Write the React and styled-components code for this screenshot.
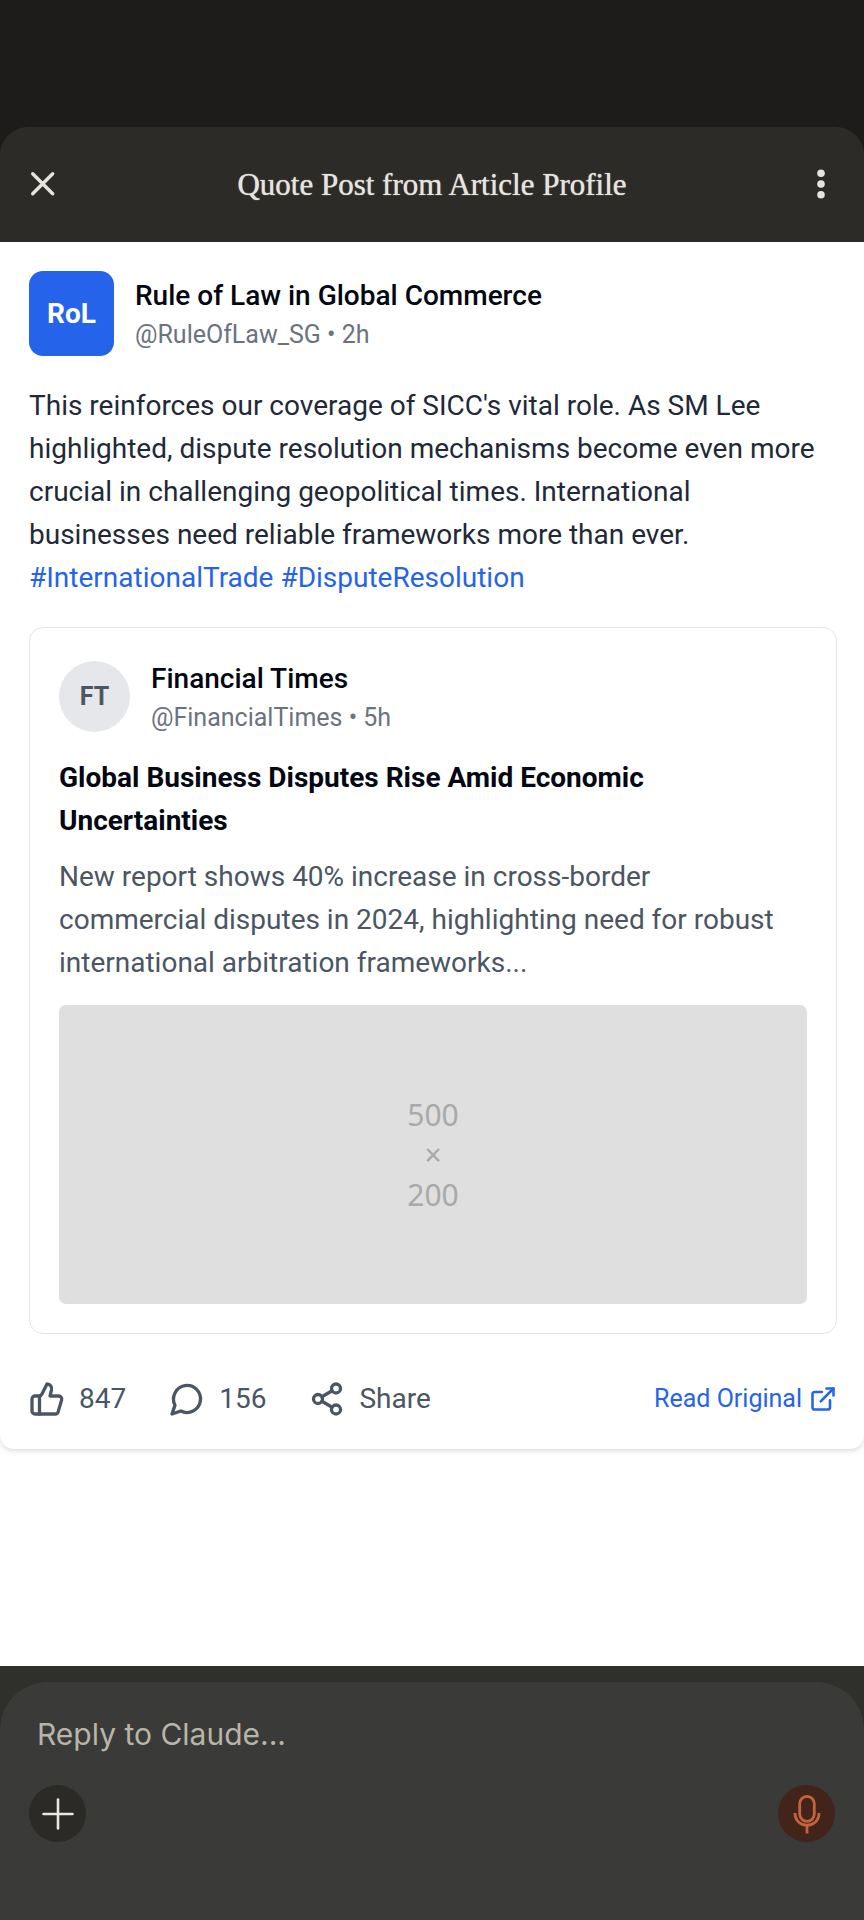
import React, { useState } from "react";
import styled, { createGlobalStyle } from "styled-components";
import { ThumbsUp, Share2, ExternalLink } from "lucide-react";

const GlobalStyle = createGlobalStyle`
  * {
    box-sizing: border-box;
  }
  body {
    margin: 0;
    background-color: #1d1c1a;
    font-family: Roboto, sans-serif;
    font-size: 28px;
    line-height: 43px;
  }
  button, input {
    font: inherit;
    border: none;
    padding: 0;
    background: none;
  }
  h1, h2, h3, p {
    margin: 0;
  }
  svg {
    display: block;
    flex: none;
  }
`;

const Page = styled.div`
  min-height: 100vh;
  padding-top: 127px;
  display: flex;
  flex-direction: column;
`;

const Header = styled.header`
  height: 115px;
  padding: 0 28px;
  display: flex;
  align-items: center;
  justify-content: space-between;
  border-radius: 28px 28px 0 0;
  background-color: #2c2b27;
  color: #e5e4df;
`;

const HeaderTitle = styled.h1`
  font-family: "Liberation Serif", serif;
  font-size: 31px;
  font-weight: 400;
  text-shadow: 0 0 1px currentColor;
`;

const HeaderButton = styled.button`
  color: inherit;
`;

const Content = styled.main`
  flex: 1;
  background-color: #fff;
`;

const PostCard = styled.article`
  padding: 29px 27px 29px 29px;
  border-radius: 0 0 14px 14px;
  background-color: #fff;
  box-shadow: 0 2px 5px rgba(0, 0, 0, 0.14);
`;

const Author = styled.div`
  display: flex;
  align-items: center;
  gap: 21px;
`;

const Logo = styled.div`
  width: 85px;
  height: 85px;
  display: flex;
  align-items: center;
  justify-content: center;
  border-radius: 14px;
  background-color: #2563eb;
  color: #fff;
  font-weight: 700;
`;

const Avatar = styled.div`
  width: 71px;
  height: 71px;
  display: flex;
  align-items: center;
  justify-content: center;
  border-radius: 50%;
  background-color: #e5e7eb;
  color: #4b5563;
  font-size: 25px;
  font-weight: 700;
`;

const AuthorName = styled.h2`
  color: #030712;
  font-size: 28px;
  font-weight: 500;
`;

const Handle = styled.p`
  color: #6b7280;
  font-size: 25px;
  line-height: 36px;
`;

const PostText = styled.p`
  margin: 28px 0;
  color: #1f2937;
`;

const Link = styled.a`
  color: #2563eb;
  text-decoration: none;
`;

const QuoteCard = styled.section`
  padding: 29px;
  border: 1px solid #e2e4e9;
  border-radius: 14px;
`;

const QuoteTitle = styled.h3`
  margin: 20px 0 13px;
  color: #030712;
  font-size: 28px;
  font-weight: 700;
`;

const QuoteText = styled.p`
  margin-bottom: 21px;
  padding-right: 14px;
  color: #4b5563;
`;

const Placeholder = styled.div`
  aspect-ratio: 5 / 2;
  display: flex;
  flex-direction: column;
  align-items: center;
  justify-content: center;
  border-radius: 7px;
  background-color: #dfdfdf;
  color: #a9a9a9;
  font-family: "Noto Sans", sans-serif;
  font-size: 30px;
  line-height: 40px;
`;

const Actions = styled.div`
  margin-top: 43px;
  display: flex;
  align-items: center;
  gap: 43px;
`;

const ActionButton = styled.button`
  display: flex;
  align-items: center;
  gap: 14px;
  color: #4b5563;
`;

const ReadLink = styled(Link)`
  margin-left: auto;
  display: flex;
  align-items: center;
  gap: 7px;
  font-size: 25px;
`;

const Footer = styled.footer`
  padding-top: 16px;
  background-color: #2f302b;
`;

const Composer = styled.div`
  padding: 31px 29px 78px;
  border-radius: 48px 48px 0 0;
  background-color: #3a3a38;
`;

const ReplyInput = styled.input`
  width: 100%;
  height: 43px;
  padding: 0 8px;
  display: block;
  outline: none;
  color: #e5e4df;
  font-family: Inter, sans-serif;
  font-size: 30px;

  &::placeholder {
    color: #b7b5a9;
    opacity: 1;
  }
`;

const ComposerBar = styled.div`
  margin-top: 29px;
  display: flex;
  justify-content: space-between;
`;

const RoundButton = styled.button`
  width: 57px;
  height: 57px;
  display: flex;
  align-items: center;
  justify-content: center;
  border-radius: 50%;
  background-color: ${(props) => (props.$accent ? "#42241b" : "#2b2a26")};
  color: ${(props) => (props.$accent ? "#c4643c" : "#e9e8e2")};
`;

function CloseIcon() {
  return (
    <svg width="28" height="28" viewBox="0 0 28 28" fill="none" stroke="currentColor" strokeWidth="3.4" strokeLinecap="round">
      <path d="M4.7 2.7 24.7 22.7M24.7 2.7 4.7 22.7" />
    </svg>
  );
}

function DotsIcon() {
  return (
    <svg width="28" height="32" viewBox="0 0 28 32" fill="currentColor">
      <circle cx="13" cy="4.2" r="3.8" />
      <circle cx="13" cy="15" r="3.8" />
      <circle cx="13" cy="25.8" r="3.8" />
    </svg>
  );
}

function CommentIcon() {
  return (
    <svg width="36" height="36" viewBox="0 0 24 24" fill="none" stroke="currentColor" strokeWidth="2.2" strokeLinecap="round" strokeLinejoin="round">
      <path d="M7.9 20A9 9 0 1 0 4 16.1L2 22Z" />
    </svg>
  );
}

function PlusIcon() {
  return (
    <svg width="32" height="32" viewBox="0 0 32 32" fill="none" stroke="currentColor" strokeWidth="2.6" strokeLinecap="round">
      <path d="M16 1.5v29M1.5 16h29" />
    </svg>
  );
}

function MicIcon() {
  return (
    <svg width="28" height="40" viewBox="0 0 28 40" fill="none" stroke="currentColor" strokeWidth="2.8">
      <rect x="6.7" y="2.3" width="14.6" height="25" rx="7.3" />
      <path d="M2 19c0 7.5 5.4 12.2 12 12.2S26 26.5 26 19M14 31v8.5" />
    </svg>
  );
}

function App() {
  const [reply, setReply] = useState("");

  return (
    <Page>
      <GlobalStyle />
      <Header>
        <HeaderButton aria-label="Close"><CloseIcon /></HeaderButton>
        <HeaderTitle>Quote Post from Article Profile</HeaderTitle>
        <HeaderButton aria-label="More options"><DotsIcon /></HeaderButton>
      </Header>
      <Content>
        <PostCard>
          <Author>
            <Logo>RoL</Logo>
            <div>
              <AuthorName>Rule of Law in Global Commerce</AuthorName>
              <Handle>@RuleOfLaw_SG • 2h</Handle>
            </div>
          </Author>
          <PostText>
            This reinforces our coverage of SICC's vital role. As SM Lee
            highlighted, dispute resolution mechanisms become even more
            crucial in challenging geopolitical times. International
            businesses need reliable frameworks more than ever.{" "}
            <Link href="#InternationalTrade">#InternationalTrade</Link>{" "}
            <Link href="#DisputeResolution">#DisputeResolution</Link>
          </PostText>
          <QuoteCard>
            <Author>
              <Avatar>FT</Avatar>
              <div>
                <AuthorName>Financial Times</AuthorName>
                <Handle>@FinancialTimes • 5h</Handle>
              </div>
            </Author>
            <QuoteTitle>Global Business Disputes Rise Amid Economic Uncertainties</QuoteTitle>
            <QuoteText>
              New report shows 40% increase in cross-border commercial disputes
              in 2024, highlighting need for robust international arbitration
              frameworks...
            </QuoteText>
            <Placeholder>
              <span>500</span>
              <span>×</span>
              <span>200</span>
            </Placeholder>
          </QuoteCard>
          <Actions>
            <ActionButton><ThumbsUp size={36} strokeWidth={2.2} />847</ActionButton>
            <ActionButton><CommentIcon />156</ActionButton>
            <ActionButton><Share2 size={36} strokeWidth={2.2} />Share</ActionButton>
            <ReadLink href="#original">Read Original<ExternalLink size={28} strokeWidth={2.2} /></ReadLink>
          </Actions>
        </PostCard>
      </Content>
      <Footer>
        <Composer>
          <ReplyInput
            aria-label="Reply to Claude"
            placeholder="Reply to Claude..."
            value={reply}
            onChange={(e) => setReply(e.target.value)}
          />
          <ComposerBar>
            <RoundButton aria-label="Add attachment"><PlusIcon /></RoundButton>
            <RoundButton $accent aria-label="Voice input"><MicIcon /></RoundButton>
          </ComposerBar>
        </Composer>
      </Footer>
    </Page>
  );
}

export default App;
